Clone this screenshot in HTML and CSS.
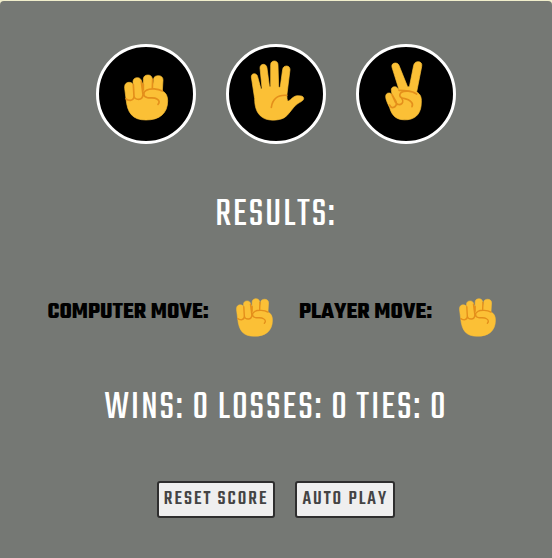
FILE: index.html
```html
<!DOCTYPE html>
<html lang="en">
<head>
<meta charset="utf-8">
<meta name="viewport" content="width=device-width, initial-scale=1">
<title>Rock Paper Scissors</title>
<link rel="stylesheet" href="styles.css">
</head>
<body>
<svg class="sprites" aria-hidden="true">
  <defs>
    <g id="fist">
      <path class="skin" d="M104 157C103 143 110 139 118 139C125 139 128 143 130 148L129 137C129 129 135 125 142 125C150 125 154 130 155 137L160 149L160 130C160 121 166 117 174 117C182 117 187 122 187 131L191 145L191 129C191 122 198 119 205 119C214 119 219 124 219 132L217 165C228 170 233 180 233 194C233 233 208 252 168 252C127 252 112 231 108 188Z"/>
      <path class="crease" d="M130 146L132 180C132 188 128 192 121 193C115 193 110 191 108 188M154 137L159 176C158 186 154 190 146 190C138 190 133 187 132 180M160 145V162M188 130L187 158M217 165C204 158 181 156 169 163C159 168 158 182 172 185C183 187 192 183 201 189C209 194 209 200 204 205"/>
    </g>
  </defs>
  <symbol id="rock" viewBox="66 72 204 204"><use href="#fist"/></symbol>
  <symbol id="rock-tight" viewBox="102 115 133 139"><use href="#fist"/></symbol>
  <symbol id="paper" viewBox="66 72 204 204">
    <path class="skin" d="M94 123C94 116 98 113 103 113C108 113 112 117 113 122L122 156C123 160 126 160 126 156L120 96C120 89 125 85 130 85C136 85 140 89 141 96L148 149C149 153 152 153 152 149L152 86C152 79 157 75 163 75C169 75 174 79 174 86L176 151C176 155 180 156 181 151L188 100C189 93 194 90 200 90C206 90 210 95 210 101L201 174C200 190 202 197 207 194C213 191 218 183 227 180C237 178 251 179 251 187C251 195 240 198 232 204C218 213 207 237 193 245C178 254 143 256 127 244C109 232 104 210 104 188Z"/>
    <path class="crease" d="M154 214C157 194 169 176 200 178"/>
  </symbol>
  <symbol id="scissors" viewBox="66 72 204 204">
    <path class="skin" d="M126 94C124 84 130 81 137 81C143 81 147 86 149 93L171 148C173 154 178 154 179 148L191 88C193 80 198 77 204 77C213 77 217 83 215 92L200 168C211 174 215 184 214 198C214 229 201 247 174 251C143 254 127 243 119 215C113 203 107 190 107 182C107 176 110 171 117 171C121 171 124 173 126 176L124 163C123 156 128 152 134 152C140 152 144 156 148 164Z"/>
    <path class="crease" d="M126 176L138 197C141 204 138 212 131 214C125 216 121 212 119 207M126 176L136 198C141 207 150 208 156 202C160 198 158 190 154 185M147 163C159 163 165 165 178 165C188 167 196 171 200 174M200 174C184 164 164 163 153 170C147 176 148 183 157 186C167 189 175 189 182 196C188 201 189 206 186 212"/>
  </symbol>
</svg>
<main class="game">
  <div class="moves">
    <button class="move" type="button" aria-label="Rock"><svg class="hand"><use href="#rock"/></svg></button>
    <button class="move" type="button" aria-label="Paper"><svg class="hand"><use href="#paper"/></svg></button>
    <button class="move" type="button" aria-label="Scissors"><svg class="hand"><use href="#scissors"/></svg></button>
  </div>
  <p class="headline">RESULTS:</p>
  <div class="picks">
    <span class="pick">COMPUTER MOVE: <svg class="hand-small"><use href="#rock-tight"/></svg></span>
    <span class="pick">PLAYER MOVE: <svg class="hand-small"><use href="#rock-tight"/></svg></span>
  </div>
  <p class="headline">WINS: 0 LOSSES: 0 TIES: 0</p>
  <div class="actions">
    <button class="action" type="button">RESET SCORE</button>
    <button class="action" type="button">AUTO PLAY</button>
  </div>
</main>
</body>
</html>
```
FILE: styles.css
```css
* {
  box-sizing: border-box;
}

body {
  margin: 0;
  padding-top: 1px;
  min-height: 100vh;
  display: flex;
  background: #f0eecb;
  font-family: Teko, "Liberation Sans Narrow", "Liberation Sans", sans-serif;
}

.sprites {
  position: absolute;
  width: 0;
  height: 0;
}

.skin {
  fill: #fbc036;
  stroke: #fbc036;
  stroke-width: 2;
}

.crease {
  fill: none;
  stroke: #e48f1b;
  stroke-width: 5;
  stroke-linecap: round;
  stroke-linejoin: round;
}

.game {
  flex: 1;
  display: flex;
  flex-direction: column;
  align-items: center;
  padding: 43px 0 40px;
  border-radius: 4px 4px 0 0;
  background: #757874;
}

.moves {
  display: flex;
  gap: 30px;
}

.move {
  display: flex;
  align-items: center;
  justify-content: center;
  width: 100px;
  height: 100px;
  padding: 0;
  border: 3px solid #fff;
  border-radius: 50%;
  background: #000;
}

.hand {
  width: 68px;
  height: 68px;
}

.hand-small {
  width: 37px;
  height: 39px;
  margin: 11px 8px 0 10px;
}

.headline {
  margin: 50px 0 49px;
  color: #fff;
  font-size: 40px;
  font-weight: 400;
  letter-spacing: 2px;
  line-height: 44px;
  white-space: nowrap;
}

.picks,
.pick {
  display: flex;
  align-items: center;
  gap: 17px;
}

.picks {
  gap: 18px;
}

.pick {
  color: #000;
  font-size: 24px;
  font-weight: 700;
  line-height: 24px;
  white-space: nowrap;
}

.actions {
  display: flex;
  gap: 20px;
  margin-top: 1px;
}

.action {
  height: 37px;
  padding: 0 5px;
  border: 2px solid #2e2e2e;
  border-radius: 3px;
  background: #efefef;
  color: #444;
  font-family: inherit;
  font-size: 20px;
  font-weight: 500;
  letter-spacing: 2px;
  white-space: nowrap;
}
```
